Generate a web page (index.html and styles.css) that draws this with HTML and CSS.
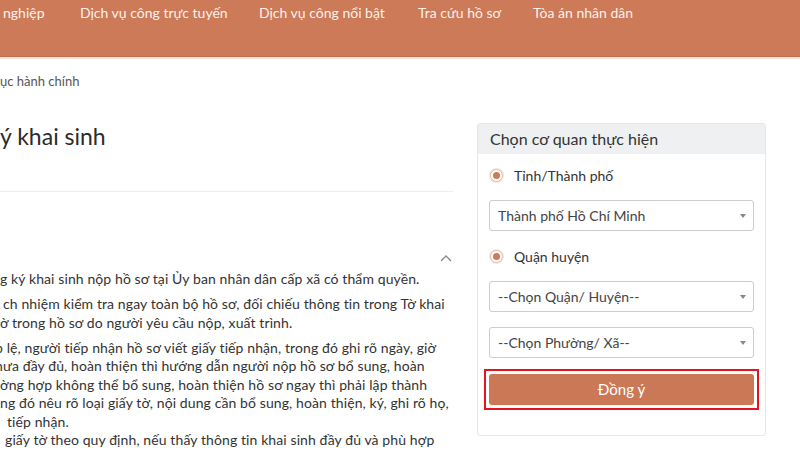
FILE: index.html
```html
<!DOCTYPE html>
<html lang="vi">
<head>
<meta charset="utf-8">
<title>Đăng ký khai sinh</title>
<link rel="stylesheet" href="styles.css">
</head>
<body>
<header class="topbar">
  <nav class="nav">
    <a class="nav-item">nghiệp</a>
    <a class="nav-item">Dịch vụ công trực tuyến</a>
    <a class="nav-item">Dịch vụ công nổi bật</a>
    <a class="nav-item">Tra cứu hồ sơ</a>
    <a class="nav-item">Tòa án nhân dân</a>
  </nav>
</header>
<div class="topbar-line"></div>
<main class="page">
  <section class="content">
    <div class="breadcrumb">ục hành chính</div>
    <h1 class="title">ý khai sinh</h1>
    <div class="divider"></div>
    <div class="accordion-head">
      <svg class="chevron" width="12" height="7" viewBox="0 0 12 7"><path d="M1 6 L6 1 L11 6" fill="none" stroke="#8a8a8a" stroke-width="1.3"/></svg>
    </div>
    <div class="text">
      <p class="para"><span class="line">g ký khai sinh nộp hồ sơ tại Ủy ban nhân dân cấp xã có thẩm quyền.</span></p>
      <p class="para"><span class="line lead3">ch nhiệm kiểm tra ngay toàn bộ hồ sơ, đối chiếu thông tin trong Tờ khai</span><span class="line">ờ trong hồ sơ do người yêu cầu nộp, xuất trình.</span></p>
      <p class="para"><span class="line"><span class="cut">p</span> lệ, người tiếp nhận hồ sơ viết giấy tiếp nhận, trong đó ghi rõ ngày, giờ</span><span class="line"><span class="cut">h</span>ưa đầy đủ, hoàn thiện thì hướng dẫn người nộp hồ sơ bổ sung, hoàn</span><span class="line">ờng hợp không thể bổ sung, hoàn thiện hồ sơ ngay thì phải lập thành</span><span class="line">ng đó nêu rõ loại giấy tờ, nội dung cần bổ sung, hoàn thiện, ký, ghi rõ họ,</span><span class="line lead7">tiếp nhận.</span><span class="line lead5">giấy tờ theo quy định, nếu thấy thông tin khai sinh đầy đủ và phù hợp</span></p>
    </div>
  </section>
  <aside class="card">
    <div class="card-head">Chọn cơ quan thực hiện</div>
    <div class="card-body">
      <label class="radio-row"><span class="radio"><span class="radio-dot"></span></span>Tỉnh/Thành phố</label>
      <div class="select">Thành phố Hồ Chí Minh<span class="caret"></span></div>
      <label class="radio-row"><span class="radio"><span class="radio-dot"></span></span>Quận huyện</label>
      <div class="select">--Chọn Quận/ Huyện--<span class="caret"></span></div>
      <div class="select">--Chọn Phường/ Xã--<span class="caret"></span></div>
      <div class="highlight"><button class="btn">Đồng ý</button></div>
    </div>
  </aside>
</main>
</body>
</html>
```

FILE: styles.css
```css
* { box-sizing: border-box; }
html, body { margin: 0; padding: 0; }
body {
  font-family: "Lato", "Roboto", "Noto Sans", sans-serif;
  color: #333;
  background: #fff;
  width: 800px;
  height: 450px;
  overflow: hidden;
}
.topbar {
  height: 57px;
  background: #cc7a58;
  border-bottom: 1px solid #c06e4d;
}
.topbar-line {
  height: 2px;
  background: #f7e6dc;
}
.nav {
  display: grid;
  grid-template-columns: 77px 179px 159px 115px auto;
  padding: 3px 0 0 3px;
}
.nav-item {
  color: #fdf1ea;
  font-size: 14px;
  line-height: 20px;
  white-space: nowrap;
}
.page {
  display: flex;
  gap: 24px;
}
.content {
  width: 453px;
  height: 391px;
  overflow: hidden;
  flex: none;
}
.breadcrumb {
  margin-top: 13px;
  font-size: 13px;
  line-height: 18px;
  color: #555;
}
.title {
  margin: 31px 0 0;
  font-size: 23px;
  line-height: 30px;
  font-weight: 400;
  color: #2b2b2b;
}
.divider {
  margin-top: 40px;
  height: 1px;
  background: #eeeeee;
}
.accordion-head {
  height: 78px;
  display: flex;
  justify-content: flex-end;
  align-items: flex-end;
  padding: 0 1px 8px 0;
}
.text { font-size: 14px; line-height: 18.5px; color: #333; letter-spacing: 0.1px; }
.para { margin: 0 0 6.5px; }
.line { display: block; white-space: nowrap; }
.lead3 { padding-left: 3px; }
.lead5 { padding-left: 5px; }
.lead7 { padding-left: 7px; }
.cut { display: inline-block; margin-left: -5px; }
.card {
  margin-top: 64px;
  width: 289px;
  height: 313px;
  border: 1px solid #e6e6e6;
  border-radius: 3px;
  flex: none;
}
.card-head {
  height: 30px;
  background: #eef0f2;
  padding: 0 12px;
  font-size: 16px;
  line-height: 30px;
  color: #333;
}
.card-body {
  padding: 11px 11px 24px;
  display: flex;
  flex-direction: column;
}
.radio-row {
  display: flex;
  align-items: center;
  height: 20px;
  font-size: 14px;
  color: #333;
  padding-left: 1px;
}
.radio {
  width: 13px;
  height: 13px;
  border-radius: 50%;
  border: 1px solid #e3b9a6;
  display: flex;
  align-items: center;
  justify-content: center;
  margin-right: 11px;
  box-shadow: 0 0 0 1px #f6e4db;
}
.radio-dot {
  width: 7px;
  height: 7px;
  border-radius: 50%;
  background: #cc7a58;
}
.select {
  position: relative;
  height: 31px;
  border: 1px solid #cccccc;
  border-radius: 3px;
  padding: 0 8px;
  font-size: 14px;
  line-height: 29px;
  color: #444;
}
.radio-row + .select { margin-top: 15px; }
.select + .radio-row { margin-top: 15px; }
.select + .select { margin-top: 15px; }
.caret {
  position: absolute;
  right: 7px;
  top: 13px;
  width: 0;
  height: 0;
  border-left: 3.5px solid transparent;
  border-right: 3.5px solid transparent;
  border-top: 4px solid #888;
}
.highlight {
  margin: 11px -5px 0;
  border: 2px solid #e3141b;
  padding: 3px;
}
.btn {
  display: block;
  width: 100%;
  height: 31px;
  border: none;
  border-radius: 3px;
  background: #cb7857;
  color: #fff;
  font-family: inherit;
  font-size: 15px;
  line-height: 31px;
  padding: 0;
}
```
